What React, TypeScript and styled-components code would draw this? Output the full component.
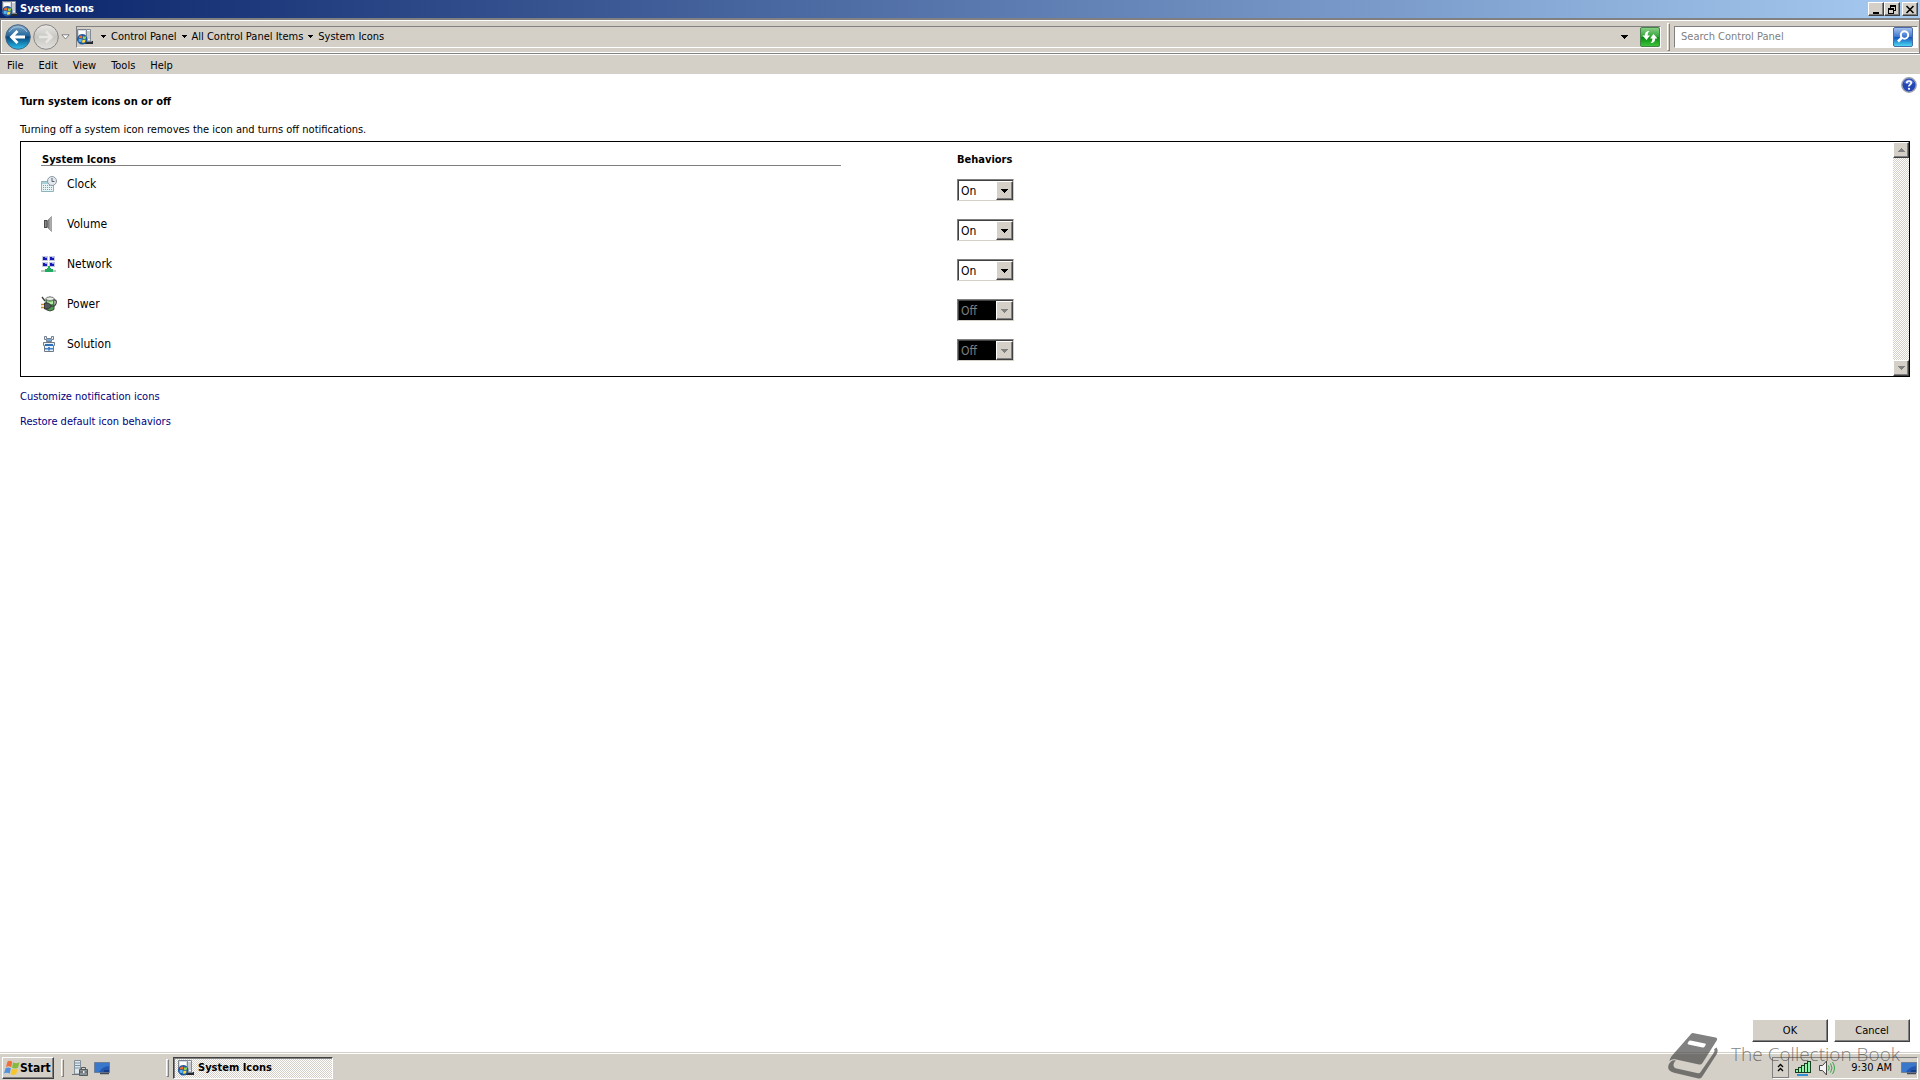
import React from 'react';
import styled, { createGlobalStyle, css } from 'styled-components';

const face = '#d4d0c8';
const shadow = '#808080';
const dark = '#404040';

const GlobalStyle = createGlobalStyle`
  *, *::before, *::after { box-sizing: border-box; }
  body { margin: 0; background: #fff; }
  body, button, input, select {
    font-family: "DejaVu Sans Condensed", Tahoma, "DejaVu Sans", sans-serif;
    font-size: 11px;
    line-height: 14px;
    color: #000;
  }
  h1, p { margin: 0; }
  svg { display: block; flex: none; }
`;

const Page = styled.div`
  position: relative;
  display: flex;
  flex-direction: column;
  min-height: 100vh;
  background: #fff;
`;

const TitleBar = styled.header`
  display: flex;
  align-items: center;
  gap: 2px;
  height: 18px;
  padding: 0 2px;
  background: linear-gradient(90deg, #0a246a, #a6caf0);
`;

const Title = styled.h1`
  flex: 1;
  font-size: 11px;
  line-height: 16px;
  color: #fff;
`;

const raised = css`
  border: 1px solid;
  border-color: #fff ${dark} ${dark} #fff;
  box-shadow: inset -1px -1px 0 ${shadow};
  background: ${face};
`;

const CaptionButton = styled.button<{ $gap?: boolean }>`
  ${raised}
  display: grid;
  place-items: center;
  width: 16px;
  height: 14px;
  padding: 0;
  margin-left: ${(p) => (p.$gap ? 0 : -2)}px;
`;

const Toolbar = styled.div`
  display: flex;
  align-items: center;
  height: 36px;
  padding: 0 1px 0 4px;
  background: ${face};
  border: 1px solid ${shadow};
  border-top-width: 2px;
  box-shadow: inset 1px 1px 0 #fff, inset 0 -1px 0 #fff;
`;

const BareButton = styled.button`
  display: block;
  padding: 0;
  border: 0;
  background: none;
`;

const NavButtons = styled.div`
  display: flex;
  align-items: center;
  gap: 2px;
  margin-right: 6px;
`;

const sunken = css`
  border: 1px solid;
  border-color: ${shadow} #fff #fff ${shadow};
`;

const AddressBar = styled.nav`
  ${sunken}
  flex: 1;
  display: flex;
  align-items: center;
  height: 22px;
  background: ${face};
`;

const Crumbs = styled.ol`
  flex: 1;
  display: flex;
  align-items: center;
  margin: 0;
  padding: 0 0 0 8px;
  list-style: none;
`;

const Crumb = styled.li`
  display: flex;
  align-items: center;
  gap: 5px;
  padding-right: 5px;
`;

const PlainLink = styled.a`
  color: #000;
  text-decoration: none;
`;

const DropButton = styled(BareButton)`
  padding: 4px 12px;
`;

const Grip = styled.div`
  width: 3px;
  height: 28px;
  margin: 0 4px 0 6px;
  border: 1px solid;
  border-color: #fff ${shadow} ${shadow} #fff;
`;

const SearchBox = styled.form`
  ${sunken}
  display: flex;
  align-items: center;
  width: 244px;
  height: 22px;
  padding-right: 4px;
  background: #fff;
`;

const SearchInput = styled.input`
  flex: 1;
  min-width: 0;
  padding: 0 6px;
  border: 0;
  outline: 0;
  background: none;
  &::placeholder { color: ${shadow}; opacity: 1; }
`;

const MenuBar = styled.nav`
  display: flex;
  gap: 1px;
  height: 20px;
  padding: 2px 0 0;
  background: ${face};
  border-top: 1px solid #fff;
`;

const MenuItem = styled.button`
  padding: 0 7px;
  border: 0;
  background: none;
`;

const Main = styled.main`
  flex: 1;
  display: flex;
  flex-direction: column;
  padding: 3px 3px 10px 20px;
`;

const HelpButton = styled(BareButton)`
  align-self: flex-end;
`;

const Heading = styled.h2`
  margin: 2px 0 14px;
  font-size: 11px;
  line-height: 14px;
`;

const Intro = styled.p`
  margin-bottom: 4px;
`;

const ListBox = styled.section`
  display: flex;
  margin: 0 7px 13px 0;
  border: 1px solid #000;
`;

const TableArea = styled.div`
  flex: 1;
  min-width: 0;
  padding: 11px 0 10px;
`;

const Table = styled.table`
  width: 100%;
  table-layout: fixed;
  border-collapse: collapse;
`;

const HeadCell = styled.th`
  width: 50%;
  padding: 0;
  text-align: left;
  vertical-align: top;
`;

const HeadLabel = styled.div<{ $ruled?: boolean }>`
  height: 13px;
  line-height: 13px;
  ${(p) =>
    p.$ruled &&
    css`
      margin: 0 116px 0 20px;
      padding-left: 1px;
      box-shadow: inset 0 -1px 0 ${shadow};
    `}
`;

const Cell = styled.td`
  height: 40px;
  padding: 10px 0 0;
  vertical-align: top;
`;

const ItemLabel = styled.label`
  display: flex;
  align-items: center;
  gap: 10px;
  padding-left: 20px;
  font-size: 12px;
  line-height: 16px;
`;

const Combo = styled.div`
  display: grid;
  grid-template-columns: 1fr 17px;
  width: 57px;
  height: 22px;
  margin-top: 3px;
  border: 1px solid;
  border-color: ${shadow} ${face} ${face} ${shadow};
  box-shadow: inset 1px 1px 0 ${dark};
  padding: 1px 0 0 1px;
`;

const Select = styled.select`
  grid-area: 1 / 1 / 2 / 3;
  appearance: none;
  padding: 0 0 0 2px;
  border: 0;
  border-radius: 0;
  background: #fff;
  font-size: 12px;
  &:disabled { background: #000; color: ${shadow}; opacity: 1; }
`;

const ComboArrow = styled.span`
  ${raised}
  grid-area: 1 / 2;
  display: grid;
  place-items: center;
  pointer-events: none;
`;

const ScrollTrack = styled.div`
  display: flex;
  flex-direction: column;
  justify-content: space-between;
  width: 16px;
  background: repeating-conic-gradient(#fff 0 25%, ${face} 0 50%) 0 0 / 2px 2px;
`;

const ScrollButton = styled.button`
  ${raised}
  display: grid;
  place-items: center;
  width: 16px;
  height: 16px;
  padding: 0;
`;

const Links = styled.div`
  display: flex;
  flex-direction: column;
  align-items: flex-start;
  gap: 11px;
`;

const TaskLink = styled.a`
  color: #000080;
  text-decoration: none;
`;

const Actions = styled.div`
  display: flex;
  justify-content: flex-end;
  gap: 6px;
  margin: auto 7px 0 0;
`;

const PushButton = styled.button`
  ${raised}
  width: 76px;
  height: 23px;
  padding: 0;
`;

const Taskbar = styled.footer`
  display: flex;
  align-items: center;
  height: 28px;
  padding: 2px 2px 0;
  background: ${face};
  border-top: 1px solid ${face};
  box-shadow: inset 0 1px 0 #fff;
`;

const StartButton = styled.button`
  ${raised}
  display: flex;
  align-items: center;
  width: 52px;
  height: 22px;
  padding: 0 1px;
  font-weight: bold;
  font-size: 12px;
`;

const TaskGrip = styled.div`
  width: 3px;
  height: 18px;
  border: 1px solid;
  border-color: #fff ${shadow} ${shadow} #fff;
`;

const QuickLaunch = styled.div`
  display: flex;
  gap: 6px;
  width: 102px;
  padding-left: 8px;
`;

const QuickArea = styled.div`
  display: flex;
  align-items: center;
  margin: 0 4px 0 7px;
`;

const TaskButton = styled.button`
  display: flex;
  align-items: center;
  gap: 4px;
  width: 160px;
  height: 22px;
  padding: 1px 4px 0;
  border: 1px solid;
  border-color: ${dark} #fff #fff ${dark};
  box-shadow: inset 1px 1px 0 ${shadow};
  background: repeating-conic-gradient(#fff 0 25%, ${face} 0 50%) 0 0 / 2px 2px;
  font-weight: bold;
`;

const Tray = styled.div`
  ${sunken}
  display: flex;
  align-items: center;
  height: 22px;
  margin-left: auto;
`;

const TrayExpand = styled.button`
  display: grid;
  place-items: center;
  width: 16px;
  height: 20px;
  padding: 0;
  border: 1px solid ${shadow};
  border-width: 0 1px 1px 0;
  background: none;
`;

const TrayIcons = styled.div`
  display: flex;
  gap: 8px;
  padding: 0 16px 0 6px;
`;

const Clock = styled.time`
  padding-right: 9px;
`;

const Watermark = styled.div`
  position: absolute;
  right: 20px;
  bottom: 1px;
  display: flex;
  align-items: center;
  gap: 12px;
  pointer-events: none;
  color: rgba(64, 64, 64, 0.66);
  font-family: "Open Sans", "Noto Sans", sans-serif;
  font-weight: 300;
  font-size: 19px;
  line-height: 24px;
`;

const WatermarkText = styled.span`
  padding-bottom: 4px;
`;

const Triangle = ({ color = '#000', up = false }: { color?: string; up?: boolean }) => (
  <svg width="7" height="4" viewBox="0 0 7 4" shapeRendering="crispEdges">
    <path d={up ? 'M3 0h1v1h1v1h1v1h1v1H0V3h1V2h1V1h1z' : 'M0 0h7v1H6v1H5v1H4v1H3V3H2V2H1V1H0z'} fill={color} />
  </svg>
);

const CrumbArrow = () => (
  <svg width="5" height="3" viewBox="0 0 5 3" shapeRendering="crispEdges">
    <path d="M0 0h5v1H4v1H3v1H2V2H1V1H0z" fill="#000" />
  </svg>
);

const Flag = () => (
  <svg width="16" height="16" viewBox="0 0 16 16">
    <path d="M3.500 1.500Q6 0 8.300 1.900L7.200 7.300Q4.800 5.600 2 7z" fill="#ee7038" />
    <path d="M9.200 2.300Q12 4.200 15.500 2.200L14 7.700Q11 9.300 8 7.700z" fill="#83bb3c" />
    <path d="M1.700 8Q4.500 6.700 6.900 8.300L5.600 13.700Q3.300 12 0 13.500z" fill="#5191dd" />
    <path d="M7.800 8.700Q10.500 10.200 13.700 8.700L12.200 14Q9.300 15.700 6.500 14z" fill="#f6c62b" />
  </svg>
);

const PanelIcon = () => (
  <svg width="16" height="16" viewBox="0 0 16 16">
    <path d="M.5.5h9V12h-9z" fill="#d8dde4" stroke="#7a8491" />
    <path d="M2 2h6v3H2z" fill="#fff" />
    <path d="M9.500.5h4V12h-4z" fill="#f5f5f5" stroke="#838b95" />
    <path d="M10 3h3M10 5h3M10 7h3M10 9h3" stroke="#9aa1aa" />
    <path d="M8 12h8v3H8z" fill="#252a30" />
    <path d="M9 12.500h6" stroke="#7d858d" />
    <circle cx="5.300" cy="10.300" r="5.200" fill="#1c579f" />
    <path d="M2.500 7Q4.500 5.800 5.400 7L5 9.600Q3.500 8.600 1.800 9.600z" fill="#f36a2e" />
    <path d="M6.100 7.200Q8 8 9.300 7L8.700 9.700Q7 10.500 5.700 9.700z" fill="#8dd34c" />
    <path d="M1.600 10.300Q3.500 9.300 4.900 10.400L4.400 13.500Q3 12.500 1.700 13z" fill="#57b4f5" />
    <path d="M5.500 10.500Q7 11.200 8.600 10.400L8 13.200Q6.500 14 5 13.500z" fill="#ffd83b" />
  </svg>
);

const BackIcon = () => (
  <svg width="26" height="26" viewBox="0 0 26 26">
    <defs>
      <linearGradient id="back" x1="0" y1="0" x2="0" y2="1">
        <stop offset="0" stopColor="#7fa8c8" />
        <stop offset=".45" stopColor="#24689c" />
        <stop offset=".5" stopColor="#07457b" />
        <stop offset="1" stopColor="#29c3f2" />
      </linearGradient>
    </defs>
    <circle cx="13" cy="13" r="12.300" fill="url(#back)" stroke="#4b6480" />
    <path d="M4 8a10.500 10.500 0 0 1 18 0" fill="none" stroke="#d7e5ef" strokeOpacity=".6" />
    <path d="M20 13H7M12.500 7L6.500 13l6 6" fill="none" stroke="#fff" strokeWidth="2.800" />
  </svg>
);

const ForwardIcon = () => (
  <svg width="26" height="26" viewBox="0 0 26 26">
    <defs>
      <linearGradient id="forward" x1="0" y1="0" x2="0" y2="1">
        <stop offset="0" stopColor="#e9e8e5" />
        <stop offset=".5" stopColor="#c9c7c2" />
        <stop offset="1" stopColor="#e4e2de" />
      </linearGradient>
    </defs>
    <circle cx="13" cy="13" r="12.300" fill="url(#forward)" stroke="#858585" />
    <path d="M6 13h12M13 7.500l5.500 5.500-5.500 5.500" fill="none" stroke="#e8e6e2" strokeWidth="2.600" />
  </svg>
);

const HistoryIcon = () => (
  <svg width="9" height="6" viewBox="0 0 9 6">
    <path d="M.8.800h7.400L4.500 5z" fill="#fff" stroke="#777" strokeWidth=".9" />
  </svg>
);

const RefreshIcon = () => (
  <svg width="20" height="20" viewBox="0 0 20 20">
    <defs>
      <linearGradient id="refresh" x1="0" y1="0" x2="0" y2="1">
        <stop offset="0" stopColor="#8ed08b" />
        <stop offset=".5" stopColor="#2fa334" />
        <stop offset=".52" stopColor="#078a0e" />
        <stop offset="1" stopColor="#3fc73d" />
      </linearGradient>
    </defs>
    <rect x=".5" y=".5" width="19" height="19" rx="1.500" fill="url(#refresh)" stroke="#45834a" />
    <path d="M9.500 4C6 4 5 5.500 4.800 8.500H2.500L6.500 13l3.500-4.500H7.600C7.700 6 8.300 5 9.500 4z" fill="#fff" />
    <path d="M10.500 16c3.500 0 4.500-1.500 4.700-4.500h2.300L13.500 7 10 11.500h2.400c-.1 2.500-.7 3.500-1.900 4.500z" fill="#fff" />
  </svg>
);

const SearchIcon = () => (
  <svg width="20" height="20" viewBox="0 0 20 20">
    <defs>
      <linearGradient id="search" x1="0" y1="0" x2="0" y2="1">
        <stop offset="0" stopColor="#a9c4ee" />
        <stop offset=".48" stopColor="#3f78d2" />
        <stop offset=".52" stopColor="#1453bd" />
        <stop offset="1" stopColor="#4fe0f5" />
      </linearGradient>
    </defs>
    <rect x=".5" y=".5" width="19" height="19" rx="1.500" fill="url(#search)" stroke="#4a6ba5" />
    <circle cx="11.500" cy="8" r="3.700" fill="none" stroke="#fff" strokeWidth="2" />
    <path d="M8.800 10.800L5 14.500" stroke="#fff" strokeWidth="2.600" />
  </svg>
);

const HelpIcon = () => (
  <svg width="16" height="16" viewBox="0 0 16 16">
    <circle cx="8" cy="8" r="7.200" fill="#2445b4" stroke="#9a9fb0" strokeWidth="1.400" />
    <path d="M3 6a5.300 5.300 0 0 1 10 0Q8 8 3 6z" fill="#5d7bd6" />
    <path d="M5.800 6.200Q5.800 4 8 4t2.200 2Q10.200 7 9 7.700T8 9.500" fill="none" stroke="#fff" strokeWidth="1.700" />
    <circle cx="8" cy="11.800" r="1.100" fill="#fff" />
  </svg>
);

const ClockIcon = () => (
  <svg width="16" height="16" viewBox="0 0 16 16">
    <path d="M.5 5.500h12v10H.5z" fill="#e6f4f6" stroke="#8fb3bb" />
    <path d="M1 6h11v2H1z" fill="#a8d2da" />
    <path d="M2 9.500h10M2 11.500h10M2 13.500h10" stroke="#58b3bd" strokeDasharray="1 1" />
    <circle cx="11" cy="5" r="4.500" fill="#e4e9ee" stroke="#8e98a5" />
    <path d="M11 2v3.500h2.500" fill="none" stroke="#56606c" />
  </svg>
);

const SpeakerIcon = () => (
  <svg width="16" height="16" viewBox="0 0 16 16">
    <defs>
      <linearGradient id="cone" x1="0" x2="1">
        <stop offset="0" stopColor="#5c5c5e" />
        <stop offset="1" stopColor="#c2c2c5" />
      </linearGradient>
    </defs>
    <path d="M3 4h3v8H3z" fill="#4b4b4d" />
    <path d="M4 5h1v6H4z" fill="#8a8a8c" />
    <path d="M5.500 5.500L10.500.500v15L5.500 10.500z" fill="url(#cone)" stroke="#7c7c80" strokeWidth=".6" />
  </svg>
);

const NetworkIcon = () => (
  <svg width="16" height="16" viewBox="0 0 16 16" shapeRendering="crispEdges">
    {[[1, 0], [8, 0], [1, 6], [8, 6]].map(([x, y]) => (
      <g key={`${x}-${y}`}>
        <path d={`M${x} ${y}h6v5h-6z`} fill="#c4cade" />
        <path d={`M${x + 1} ${y + 1}h4v3h-4z`} fill="#1718b8" />
        <path d={`M${x + 3} ${y + 1}h2v1h-2z`} fill="#93a0ff" />
      </g>
    ))}
    <path d="M0 14h15v2H0z" fill="#b5cabd" />
    <path d="M7 10h2v2h1v1h2v3H4v-3h2v-1h1z" fill="#20ab61" />
  </svg>
);

const PowerIcon = () => (
  <svg width="16" height="16" viewBox="0 0 16 16">
    <path d="M5 2.500Q9-.5 13 2.500v11q-4 3-8 0z" fill="#4aa04a" stroke="#444b44" />
    <ellipse cx="9" cy="2.700" rx="4" ry="1.800" fill="#e9efe8" stroke="#666" strokeWidth=".7" />
    <path d="M6 5q3 1.500 6 0v3H6z" fill="#b5e6a3" />
    <path d="M0 8.500h4M0 11.500h4" stroke="#c79223" strokeWidth="1.400" />
    <path d="M3.500 7Q8 5.500 10.500 10 8 14 3.500 13z" fill="#54585c" stroke="#24272a" strokeWidth=".8" />
    <path d="M10 10q5 1 5.300-4Q15 3.500 13 4M1 1l3 4" fill="none" stroke="#3a403c" strokeWidth="1.300" />
  </svg>
);

const SolutionIcon = () => (
  <svg width="16" height="16" viewBox="0 0 16 16">
    <path d="M3.500.5h2v2h5v-2h2v3h-2v2h-5v-2h-2z" fill="#e4edf6" stroke="#667383" strokeWidth=".9" />
    <path d="M2.500 6.500h11v3h-1v6h-9v-6h-1z" fill="#eaf2fa" stroke="#6d7885" />
    <path d="M6 3h4v2H6z" fill="#74a6d8" />
    <path d="M4 8h8v2H4z" fill="#2e6fb8" />
    <path d="M4 12h3v-1h2v1h3v1.500H9v1H7v-1H4z" fill="#4581c4" />
  </svg>
);

const ServerIcon = () => (
  <svg width="16" height="16" viewBox="0 0 16 16">
    <path d="M2.500.5h6V14h-6z" fill="#dfe6ea" stroke="#83909a" />
    <path d="M3 3h5M3 5.500h5M3 8h5" stroke="#7895a6" />
    <path d="M0 14.500h9" stroke="#69757e" />
    <path d="M7.500 9.500h8v6h-8z" fill="#8b9298" stroke="#535b61" />
    <path d="M9.500 9V7.500h4V9M8 12h7" fill="none" stroke="#535b61" />
    <path d="M11 11h1.500v2H11z" fill="#eee" />
  </svg>
);

const DesktopIcon = () => (
  <svg width="16" height="16" viewBox="0 0 16 16">
    <path d="M.5 2.500h15v10H.5z" fill="#2458b0" stroke="#6d7f99" />
    <path d="M1 3h14v3Q9 6 5 12H1z" fill="#3a78cc" />
    <path d="M10 10h5v2h-5z" fill="#153e83" />
    <path d="M6 13.500h9" stroke="#424b57" strokeWidth="1.500" />
  </svg>
);

const SignalIcon = () => (
  <svg width="16" height="16" viewBox="0 0 16 16" shapeRendering="crispEdges">
    {[0, 1, 2, 3, 4].map((i) => (
      <rect key={i} x={i * 3 + 0.5} y={9.5 - i * 2} width="3" height={3 + i * 2} fill="#8df5a8" stroke="#173c20" />
    ))}
    <path d="M2 15h11" stroke="#2f8fd3" strokeWidth="2" />
  </svg>
);

const TrayVolumeIcon = () => (
  <svg width="16" height="16" viewBox="0 0 16 16">
    <path d="M.5 5.500h3l4-4.500v14l-4-4.500h-3z" fill="#f4f4f4" stroke="#444" />
    <path d="M9.500 5.500q1.500 2.500 0 5M11.500 3.500q3 4.500 0 9M13.500 2q4 6 0 12" fill="none" stroke="#35a548" />
  </svg>
);

const BookIcon = () => (
  <svg width="51" height="46" viewBox="0 0 51 46">
    <path
      fillRule="evenodd"
      fill="currentColor"
      d="M23 1Q24-.3 26 .2L47.500 4.600q2.500.6 1.200 2.800L34.500 30q-1.300 2-3.500 1.500L7 26.300q-3.500-.6-5.500 1.700.5-2.500 2-4.700zM22.500 7.500q-1.200-.2-1.900 1l-.8 1.300q-.6 1.300.6 1.600l14.300 3q1.300.3 2-.9l.9-1.500q.6-1.200-.6-1.500z"
    />
    <path
      fill="currentColor"
      d="M3 28.500Q5 26.800 8 27.500q-2 1-2.500 4-.2 3 2 3.800L30 40.200q1.500.4 2.400-1L46 19.500q.8-1.300.2-3.500l2.500-1.500q2 3.500-.2 7L34.300 43.500Q33 46 30.500 45.400L6 39.700Q-.5 38 .2 33.500.6 30.500 3 28.500z"
    />
  </svg>
);

const crumbs = ['Control Panel', 'All Control Panel Items', 'System Icons'];
const menus = ['File', 'Edit', 'View', 'Tools', 'Help'];
const items = [
  { name: 'Clock', Icon: ClockIcon, on: true },
  { name: 'Volume', Icon: SpeakerIcon, on: true },
  { name: 'Network', Icon: NetworkIcon, on: true },
  { name: 'Power', Icon: PowerIcon, on: false },
  { name: 'Solution', Icon: SolutionIcon, on: false },
];

export default function App() {
  return (
    <>
      <GlobalStyle />
      <Page>
        <TitleBar>
          <PanelIcon />
          <Title>System Icons</Title>
          <CaptionButton $gap aria-label="Minimize">
            <svg width="10" height="9" viewBox="0 0 10 9"><path d="M2 7h6v2H2z" fill="#000" /></svg>
          </CaptionButton>
          <CaptionButton aria-label="Restore">
            <svg width="10" height="9" viewBox="0 0 10 9" shapeRendering="crispEdges">
              <path d="M3 0h6v6H7V5h1V2H4v1H3zM1 3h6v6H1zM2 5v3h4V5z" fillRule="evenodd" fill="#000" />
            </svg>
          </CaptionButton>
          <CaptionButton $gap aria-label="Close">
            <svg width="10" height="9" viewBox="0 0 10 9"><path d="M1.500 1l7 7M8.500 1l-7 7" stroke="#000" strokeWidth="1.600" /></svg>
          </CaptionButton>
        </TitleBar>

        <Toolbar>
          <NavButtons>
            <BareButton aria-label="Back"><BackIcon /></BareButton>
            <BareButton aria-label="Forward"><ForwardIcon /></BareButton>
            <BareButton aria-label="Recent pages"><HistoryIcon /></BareButton>
          </NavButtons>
          <AddressBar aria-label="Address">
            <PanelIcon />
            <Crumbs>
              {crumbs.map((c) => (
                <Crumb key={c}>
                  <CrumbArrow />
                  <PlainLink href="#">{c}</PlainLink>
                </Crumb>
              ))}
            </Crumbs>
            <DropButton aria-label="Previous locations"><Triangle /></DropButton>
            <BareButton aria-label="Refresh"><RefreshIcon /></BareButton>
          </AddressBar>
          <Grip />
          <SearchBox>
            <SearchInput aria-label="Search Control Panel" placeholder="Search Control Panel" />
            <BareButton type="button" aria-label="Search"><SearchIcon /></BareButton>
          </SearchBox>
        </Toolbar>

        <MenuBar>
          {menus.map((m) => <MenuItem key={m}>{m}</MenuItem>)}
        </MenuBar>

        <Main>
          <HelpButton aria-label="Help"><HelpIcon /></HelpButton>
          <Heading>Turn system icons on or off</Heading>
          <Intro>Turning off a system icon removes the icon and turns off notifications.</Intro>
          <ListBox>
            <TableArea>
              <Table>
                <thead>
                  <tr>
                    <HeadCell scope="col"><HeadLabel $ruled>System Icons</HeadLabel></HeadCell>
                    <HeadCell scope="col"><HeadLabel>Behaviors</HeadLabel></HeadCell>
                  </tr>
                </thead>
                <tbody>
                  {items.map(({ name, Icon, on }) => (
                    <tr key={name}>
                      <Cell>
                        <ItemLabel htmlFor={`behavior-${name}`}><Icon />{name}</ItemLabel>
                      </Cell>
                      <Cell>
                        <Combo>
                          <Select id={`behavior-${name}`} defaultValue={on ? 'On' : 'Off'} disabled={!on}>
                            <option>On</option>
                            <option>Off</option>
                          </Select>
                          <ComboArrow><Triangle color={on ? '#000' : shadow} /></ComboArrow>
                        </Combo>
                      </Cell>
                    </tr>
                  ))}
                </tbody>
              </Table>
            </TableArea>
            <ScrollTrack>
              <ScrollButton disabled aria-label="Scroll up"><Triangle up color={shadow} /></ScrollButton>
              <ScrollButton disabled aria-label="Scroll down"><Triangle color={shadow} /></ScrollButton>
            </ScrollTrack>
          </ListBox>
          <Links>
            <TaskLink href="#">Customize notification icons</TaskLink>
            <TaskLink href="#">Restore default icon behaviors</TaskLink>
          </Links>
          <Actions>
            <PushButton>OK</PushButton>
            <PushButton>Cancel</PushButton>
          </Actions>
        </Main>

        <Taskbar>
          <StartButton><Flag />Start</StartButton>
          <QuickArea>
            <TaskGrip />
            <QuickLaunch>
              <BareButton aria-label="Server Manager"><ServerIcon /></BareButton>
              <BareButton aria-label="Show desktop"><DesktopIcon /></BareButton>
            </QuickLaunch>
            <TaskGrip />
          </QuickArea>
          <TaskButton><PanelIcon />System Icons</TaskButton>
          <Tray>
            <TrayExpand aria-label="Show hidden icons">
              <svg width="7" height="9" viewBox="0 0 7 9"><path d="M1 4l2.500-2.500L6 4M1 8l2.500-2.500L6 8" fill="none" stroke="#000" strokeWidth="1.400" /></svg>
            </TrayExpand>
            <TrayIcons><SignalIcon /><TrayVolumeIcon /></TrayIcons>
            <Clock>9:30 AM</Clock>
            <DesktopIcon />
          </Tray>
        </Taskbar>

        <Watermark>
          <BookIcon />
          <WatermarkText>The Collection Book</WatermarkText>
        </Watermark>
      </Page>
    </>
  );
}
